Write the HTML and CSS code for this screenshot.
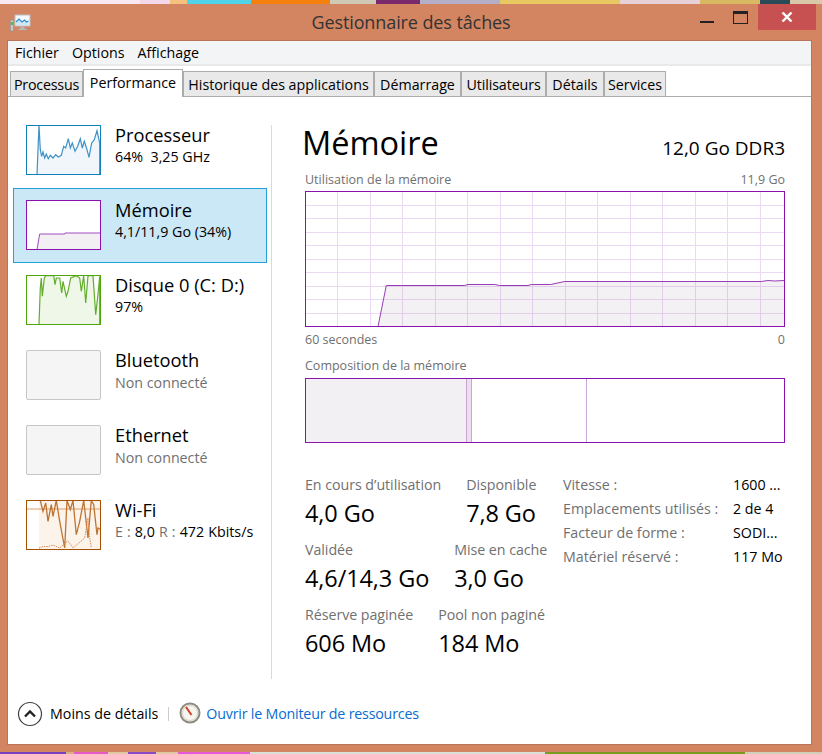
FILE: index.html
```html
<!DOCTYPE html>
<html lang="fr">
<head>
    <meta charset="UTF-8">
    <title>Gestionnaire des tâches</title>
    <link rel="stylesheet" href="styles.css">
</head>
<body>
    <div class="wallpaper wallpaper-top"></div>
    <div class="window">
        <div class="titlebar">
            <svg class="app-icon" width="21" height="19" viewBox="0 0 21 19">
                <rect x="0.5" y="6" width="3" height="11" fill="#c9c9c9" stroke="#8f8f8f" stroke-width="0.6"/>
                <rect x="1" y="8" width="2" height="3" fill="#4fc04a"/>
                <rect x="5" y="1" width="15" height="11" fill="#f4f8fb" stroke="#b9bfc4"/>
                <path d="M6 11V8l3-3 3 3 2.500-2 2 2 2-1v4z" fill="#cfe6f6"/>
                <path d="M6 8l3-3 3 3 2.500-2 2 2 2-1" fill="none" stroke="#2a8fd0" stroke-width="1.100"/>
                <path d="M11 12.500h3l1 2.500h2v1H8v-1h2z" fill="#b5b9bc"/>
            </svg>
            <div class="title">Gestionnaire des tâches</div>
            <div class="btn-min"></div>
            <div class="btn-max"></div>
            <div class="btn-close">
                <svg width="12" height="10" viewBox="0 0 12 10"><path d="M1.500 0.500l9 9M10.500 0.500l-9 9" stroke="#fff" stroke-width="2.400" fill="none"/></svg>
            </div>
        </div>
        <div class="client">
            <div class="menu">
                <span>Fichier</span>
                <span>Options</span>
                <span>Affichage</span>
            </div>
            <div class="tabs">
                <div class="tab tab-processus">Processus</div>
                <div class="tab active">Performance</div>
                <div class="tab tab-historique">Historique des applications</div>
                <div class="tab tab-demarrage">Démarrage</div>
                <div class="tab tab-utilisateurs">Utilisateurs</div>
                <div class="tab tab-details">Détails</div>
                <div class="tab tab-services">Services</div>
            </div>
            <div class="perf">
                <div class="sidebar">
                    <div class="item">
                        <svg class="thumb" width="75" height="50" viewBox="0 0 75 50">
                            <path d="M11 49.500L13 .3 14.300 24.700 15.700 31.300 17 27 18.700 33 20.300 29 22.300 33.700 24.300 30.300 27 33 29.700 29.700 32.300 32 35.300 30.300 37.700 21.300 39.700 23 42.300 13.700 44.300 23 46.300 18 49 26.300 51.700 21.300 54.300 13.700 56.300 23 58.300 16.300 61 24.700 63 32.300 65.700 18 68.300 14.700 71 5.700 73.700 18V49.500z" fill="#f1f6fa" stroke="#3f92c5" stroke-width="1.200"/>
                            <rect x=".5" y=".5" width="74" height="49" fill="none" stroke="#117dbb"/>
                        </svg>
                        <div class="item-text">
                            <div class="name">Processeur</div>
                            <div class="sub">64%&nbsp; 3,25 GHz</div>
                        </div>
                    </div>
                    <div class="item selected">
                        <svg class="thumb" width="75" height="50" viewBox="0 0 75 50">
                            <rect width="75" height="50" fill="#fff"/>
                            <path d="M11 49.500L13.700 34H38.700L39 33H75V49.500z" fill="#f3f0f4" stroke="#a24cc0" stroke-width="1"/>
                            <rect x=".5" y=".5" width="74" height="49" fill="none" stroke="#8b12ae"/>
                        </svg>
                        <div class="item-text">
                            <div class="name">Mémoire</div>
                            <div class="sub">4,1/11,9 Go (34%)</div>
                        </div>
                    </div>
                    <div class="item">
                        <svg class="thumb" width="75" height="50" viewBox="0 0 75 50">
                            <path d="M13 49.500L14.300 13 15.300 3 16.300 21.300 18.300 3 19.700 .7H27.700L29 9.700 30.300 3H33.700L35.700 18 37 6.300 40.300 21.300 42 16.300 44.700 3 50.300 .7 53.700 3 55.300 16.300 57.700 .7 59.700 28 62 .7H67L69.700 39.700 72.300 16.300 73.700 1.300V49.500z" fill="#eff7e9" stroke="#62ad2c" stroke-width="1.200"/>
                            <rect x=".5" y=".5" width="74" height="49" fill="none" stroke="#4da60c"/>
                        </svg>
                        <div class="item-text">
                            <div class="name">Disque 0 (C: D:)</div>
                            <div class="sub">97%</div>
                        </div>
                    </div>
                    <div class="item">
                        <div class="thumb thumb-off"></div>
                        <div class="item-text">
                            <div class="name">Bluetooth</div>
                            <div class="sub muted">Non connecté</div>
                        </div>
                    </div>
                    <div class="item">
                        <div class="thumb thumb-off"></div>
                        <div class="item-text">
                            <div class="name">Ethernet</div>
                            <div class="sub muted">Non connecté</div>
                        </div>
                    </div>
                    <div class="item">
                        <svg class="thumb" width="75" height="50" viewBox="0 0 75 50">
                            <rect x="13" y="1" width="61" height="48" fill="#fcf3eb"/>
                            <path d="M0 9H75" stroke="#d9a06c" stroke-width="1"/>
                            <path d="M14.300 .5L17 11.300 19.700 3 22 21.300 25.300 4.700 27 16.300 30.300 .5 33.700 21.300 38.700 48 41 .5 44.300 9.700 47 .5 50.300 34.700 53.700 21.300 57.700 .5 62 38 65.300 .5 67.700 4.700 71 34.700 72 28 75 29.700" fill="none" stroke="#bd7432" stroke-width="1.300"/>
                            <path d="M13 48L17 46.500 22 46.500 27 45 33.700 48 42 40.700 47 48 58.700 38 62 18 63.700 38 65.300 48" fill="none" stroke="#dd8a52" stroke-width="1" stroke-dasharray="1.500 1"/>
                            <rect x=".5" y=".5" width="74" height="49" fill="none" stroke="#a74f01"/>
                        </svg>
                        <div class="item-text">
                            <div class="name">Wi-Fi</div>
                            <div class="sub sub-wide"><span class="muted">E :</span> 8,0 <span class="muted">R :</span> 472 Kbits/s</div>
                        </div>
                    </div>
                </div>
                <div class="divider"></div>
                <div class="main">
                    <div class="header">
                        <div class="heading">Mémoire</div>
                        <div class="spec">12,0 Go DDR3</div>
                    </div>
                    <div class="caption caption-top">
                        <span>Utilisation de la mémoire</span>
                        <span>11,9 Go</span>
                    </div>
                    <svg class="graph" width="480" height="136" viewBox="0 0 480 136">
                        <path d="M32.500 0V136M65.500 0V136M97.500 0V136M130.500 0V136M162.500 0V136M195.500 0V136M227.500 0V136M260.500 0V136M292.500 0V136M325.500 0V136M357.500 0V136M390.500 0V136M422.500 0V136M455.500 0V136M0 14.500H480M0 27.500H480M0 41.500H480M0 54.500H480M0 68.500H480M0 81.500H480M0 95.500H480M0 108.500H480M0 122.500H480" stroke="#ecd9f3" fill="none"/>
                        <path d="M73 135.500L81.300 94H159.700L163 93H189.700L194.700 94H223L226.300 93H245.700L259.700 90H456.300L463 89 469.700 89.700 479.300 89V135.500z" fill="rgba(100,80,120,.08)"/>
                        <path d="M73 135.500L81.300 94.500H159.700L163 93.500H189.700L194.700 94.500H223L226.300 93.500H245.700L259.700 90.500H456.300L463 89.500 469.700 90 479.300 89.500" fill="none" stroke="#9a3cb8"/>
                        <rect x=".5" y=".5" width="479" height="135" fill="none" stroke="#8b12ae"/>
                    </svg>
                    <div class="caption caption-axis">
                        <span>60 secondes</span>
                        <span>0</span>
                    </div>
                    <div class="caption caption-comp">Composition de la mémoire</div>
                    <div class="compo">
                        <div class="seg seg-used"></div>
                        <div class="seg seg-mod"></div>
                        <div class="seg seg-standby"></div>
                        <div class="seg seg-free"></div>
                    </div>
                    <div class="details">
                        <div class="stats">
                            <div class="stat-row">
                                <div class="stat"><div class="stat-label">En cours d’utilisation</div><div class="stat-value">4,0 Go</div></div>
                                <div class="stat"><div class="stat-label">Disponible</div><div class="stat-value">7,8 Go</div></div>
                            </div>
                            <div class="stat-row">
                                <div class="stat"><div class="stat-label">Validée</div><div class="stat-value">4,6/14,3 Go</div></div>
                                <div class="stat"><div class="stat-label">Mise en cache</div><div class="stat-value">3,0 Go</div></div>
                            </div>
                            <div class="stat-row">
                                <div class="stat"><div class="stat-label">Réserve paginée</div><div class="stat-value">606 Mo</div></div>
                                <div class="stat"><div class="stat-label">Pool non paginé</div><div class="stat-value">184 Mo</div></div>
                            </div>
                        </div>
                        <div class="props">
                            <span class="prop-label">Vitesse :</span><span>1600 ...</span>
                            <span class="prop-label">Emplacements utilisés :</span><span>2 de 4</span>
                            <span class="prop-label">Facteur de forme :</span><span>SODI...</span>
                            <span class="prop-label">Matériel réservé :</span><span>117 Mo</span>
                        </div>
                    </div>
                </div>
            </div>
            <div class="footer">
                <svg class="less" width="26" height="26" viewBox="0 0 26 26">
                    <circle cx="13" cy="13" r="11.500" fill="#fff" stroke="#404040" stroke-width="1.200"/>
                    <path d="M8 15.500l5-5 5 5" fill="none" stroke="#222" stroke-width="2.400"/>
                </svg>
                <span class="less-text">Moins de détails</span>
                <span class="sep"></span>
                <svg class="gauge" width="22" height="22" viewBox="0 0 22 22">
                    <circle cx="11" cy="11" r="9.500" fill="#f6f5f0" stroke="#8f8b80" stroke-width="2"/>
                    <circle cx="11" cy="11" r="7.500" fill="none" stroke="#d8d4c8" stroke-width="1"/>
                    <path d="M7 5l5.500 8" stroke="#d2402a" stroke-width="2"/>
                </svg>
                <span class="link">Ouvrir le Moniteur de ressources</span>
            </div>
        </div>
    </div>
    <div class="wallpaper wallpaper-bottom"></div>
</body>
</html>
```

FILE: styles.css
```css
html, body {
    margin: 0;
    height: 754px;
    overflow: hidden;
}
body {
    width: 822px;
    display: flex;
    flex-direction: column;
    font-family: "Open Sans", "Noto Sans", sans-serif;
    font-size: 14.25px;
    color: #000;
}
.wallpaper {
    flex: none;
}
.wallpaper-top {
    height: 4px;
    background: linear-gradient(90deg, #f8e8f0 0 140px, #f2d8e8 140px 170px, #f4c27e 170px 187px, #4ed4e6 187px 251px, #f5800c 251px 330px, #cfc8b4 330px 376px, #7a2a6a 376px 420px, #b4aec8 420px 500px, #e8c860 500px 620px, #e8d0d8 620px 700px, #d8b860 700px 760px, #2a4a58 760px 790px, #d8c8a8 790px);
}
.wallpaper-bottom {
    height: 2px;
    background: linear-gradient(90deg, #7a3fc0 0 66px, #d9b080 66px 74px, #e858c8 74px 108px, #e0c8a0 108px 128px, #8a4ac8 128px 156px, #e0c8a0 156px 178px, #e858d8 178px 250px, #d8e0d8 250px 545px, #7a9a20 545px 745px, #d0d0b8 745px);
}
.window {
    flex: 1;
    display: flex;
    flex-direction: column;
    background: #d38562;
    padding: 0 11px 8px 8px;
}

/* title bar */
.titlebar {
    position: relative;
    height: 37px;
    flex: none;
}
.app-icon {
    position: absolute;
    left: 2px;
    top: 10px;
}
.title {
    text-align: center;
    margin: 6px 0 0 3px;
    font-size: 18px;
    line-height: 25px;
    letter-spacing: -0.1px;
    color: #333;
}
.btn-min {
    position: absolute;
    left: 692px;
    top: 17px;
    width: 14px;
    height: 2px;
    background: #222;
}
.btn-max {
    position: absolute;
    left: 725px;
    top: 7px;
    width: 13px;
    height: 9px;
    border: 1px solid #222;
    border-top-width: 3px;
}
.btn-close {
    position: absolute;
    left: 750px;
    top: 0;
    width: 58px;
    height: 26px;
    background: #c75050;
    display: flex;
    align-items: center;
    justify-content: center;
}

/* client area */
.client {
    flex: 1;
    display: flex;
    flex-direction: column;
    background: #fff;
    box-shadow: 0 0 0 1px #b9745a;
}
.menu {
    height: 25px;
    box-sizing: border-box;
    padding-left: 7px;
    flex: none;
    display: flex;
    gap: 13px;
    align-items: center;
    background: #f3f4f6;
    border-bottom: 2px solid #e9e9e9;
}
.tabs {
    height: 30px;
    flex: none;
    display: flex;
    align-items: flex-end;
    padding-left: 2px;
    border-bottom: 1px solid #acacac;
}
.tab {
    height: 25px;
    box-sizing: border-box;
    line-height: 26px;
    text-align: center;
    white-space: nowrap;
    background: #e9e9e9;
    border: 1px solid #acacac;
    border-bottom: none;
}
.tab.active {
    position: relative;
    width: 100px;
    height: 28px;
    margin-bottom: -1px;
    background: #fff;
    z-index: 1;
}
.tab-processus {
    width: 73px;
    letter-spacing: -0.2px;
}
.tab-historique {
    width: 191px;
}
.tab-demarrage {
    width: 87px;
}
.tab-utilisateurs {
    width: 85px;
    letter-spacing: -0.1px;
}
.tab-details {
    width: 58px;
}
.tab-services {
    width: 62px;
}

/* left column */
.perf {
    flex: 1;
    display: flex;
    padding-top: 16px;
}
.sidebar {
    width: 254px;
    margin-left: 5px;
    flex: none;
}
.divider {
    width: 1px;
    height: 554px;
    margin: 12px 0 0 4px;
    background: #d9d9d9;
    flex: none;
}
.item {
    height: 75px;
    box-sizing: border-box;
    display: flex;
    gap: 14px;
    padding: 12px 0 0 13px;
}
.item.selected {
    background: #cbe8f6;
    box-shadow: inset 0 0 0 1px #26a0da;
}
.thumb {
    flex: none;
}
.item-text {
    margin-top: -3px;
}
.thumb-off {
    box-sizing: border-box;
    width: 75px;
    height: 50px;
    background: #f5f5f5;
    border: 1px solid #c6c6c6;
    border-radius: 2px;
}
.name {
    font-size: 18.3px;
    line-height: 26px;
}
.sub {
    line-height: 19px;
    margin-top: -1px;
}
.sub.muted {
    margin-top: 0;
}
.sub-wide {
    word-spacing: 0.4px;
}
.muted {
    color: #707070;
}

/* right column */
.main {
    width: 480px;
    margin: 12px 0 0 33px;
    flex: none;
}
.header {
    display: flex;
    justify-content: space-between;
    align-items: baseline;
    height: 48px;
    margin-top: -1px;
}
.heading {
    font-size: 32.5px;
    line-height: 38px;
    margin-left: -3px;
}
.spec {
    font-size: 19px;
}
.caption {
    display: flex;
    justify-content: space-between;
    font-size: 12.5px;
    line-height: 16px;
    color: #707070;
}
.graph {
    display: block;
}
.caption-top {
    height: 19px;
}
.caption-axis {
    margin-top: 5px;
}
.caption-comp {
    margin-top: 10px;
    height: 20px;
}
.compo {
    box-sizing: border-box;
    height: 65px;
    display: flex;
    border: 1px solid #8b12ae;
}
.seg {
    flex: none;
}
.seg-used {
    width: 160px;
    background: #f3f0f4;
}
.seg-mod {
    width: 6px;
    background: #ecdff0;
    border-left: 1px solid #c9a6d6;
    border-right: 1px solid #c9a6d6;
    box-sizing: border-box;
}
.seg-standby {
    width: 114px;
    border-right: 1px solid #c9a6d6;
}

/* stats */
.details {
    display: flex;
    margin-top: 33px;
}
.stats {
    width: 258px;
    flex: none;
}
.stat-row {
    display: flex;
    gap: 25px;
    height: 65px;
}
.stat-label {
    line-height: 18px;
    letter-spacing: -0.05px;
    color: #707070;
}
.stat-value {
    font-size: 23.5px;
    line-height: 32px;
    letter-spacing: -0.1px;
    margin-top: 3px;
}
.props {
    display: grid;
    grid-template-columns: 170px auto;
    grid-auto-rows: 24px;
    line-height: 18px;
    align-self: flex-start;
}
.prop-label {
    color: #707070;
}

/* footer */
.footer {
    flex: none;
    height: 65px;
    display: flex;
    align-items: center;
    padding: 4px 0 0 9px;
    box-sizing: border-box;
}
.less {
    flex: none;
    margin-right: 7px;
}
.sep {
    width: 1px;
    height: 14px;
    background: #ccc;
    margin: 0 10px;
}
.gauge {
    flex: none;
    margin: -2px 5px 0 0;
}
.link {
    color: #0a6cd0;
    letter-spacing: -0.2px;
}
```
